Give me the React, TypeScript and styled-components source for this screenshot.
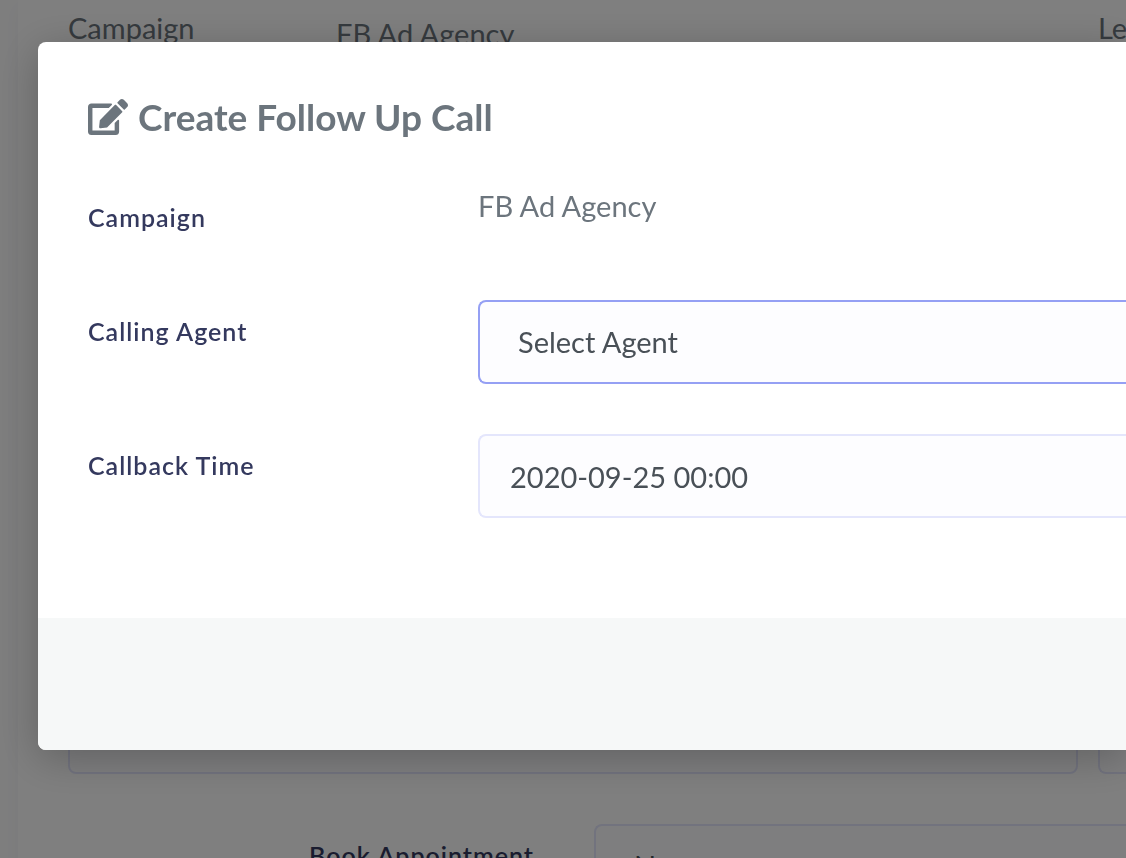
import React from 'react';
import styled, { createGlobalStyle } from 'styled-components';
import { FaEdit } from 'react-icons/fa';

const GlobalStyle = createGlobalStyle`
  *, *::before, *::after { box-sizing: border-box; }
  html, body { margin: 0; height: 100%; overflow: hidden; }
  body {
    background: #fcfcfd;
    color: #6c757d;
    font-family: Lato, "Open Sans", sans-serif;
    font-size: 29px;
    line-height: 40px;
  }
  input, select, textarea, button { font: inherit; margin: 0; }
`;

const Page = styled.div`
  height: 100vh;
  padding-left: 18px;
  overflow: hidden;
`;

const Card = styled.main`
  display: flex;
  flex-direction: column;
  min-height: 100%;
  padding: 8px 0 0 50px;
  background: #fff;
  box-shadow: 0 8px 16px rgba(0, 0, 0, 0.03);
`;

const Columns = styled.div`
  display: flex;
  gap: 20px;
`;

const Column = styled.section<{ $edge?: boolean }>`
  display: flex;
  flex-direction: column;
  flex: ${(p) => (p.$edge ? '0 0 28px' : '1 1 0')};
  min-width: 0;
`;

const Summary = styled.div`
  display: grid;
  grid-template-columns: 268px 1fr;
  height: 66px;
`;

const SummaryValue = styled.span`
  padding-top: 6px;
`;

const Notes = styled.textarea<{ $edge?: boolean }>`
  width: 100%;
  height: 700px;
  border: 2px solid #e4e6fc;
  border-width: ${(p) => (p.$edge ? '2px 0 2px 2px' : '2px')};
  border-radius: ${(p) => (p.$edge ? '8px 0 0 8px' : '8px')};
  background: #fdfdff;
  resize: none;
  outline: none;
`;

const Label = styled.label`
  padding-top: 14px;
  color: #34395e;
  font-size: 25px;
  font-weight: 600;
  line-height: 34px;
  letter-spacing: 1px;
`;

const controlLook = `
  width: 100%;
  height: 84px;
  border: 2px solid #e4e6fc;
  border-right: 0;
  border-radius: 8px 0 0 8px;
  background: #fdfdff;
  color: #495057;
  outline: none;
`;

const Select = styled.select`
  ${controlLook}
  appearance: none;
  padding: 0 38px;

  &:focus { border-color: #95a0f4; }
`;

const AgentSelect = styled(Select)`
  border-color: #95a0f4;
`;

const Input = styled.input`
  ${controlLook}
  padding: 0 30px;
`;

const Booking = styled.div`
  display: grid;
  grid-template-columns: 466px 1fr;
  column-gap: 60px;
  margin-top: 50px;

  ${Label} { text-align: right; }
`;

const Backdrop = styled.div`
  position: fixed;
  inset: 0;
  padding: 42px 0 0 38px;
  background: rgba(0, 0, 0, 0.5);
  overflow: hidden;
`;

const Dialog = styled.div`
  border-radius: 8px 0 0 8px;
  background: #fff;
  box-shadow: 0 8px 40px rgba(0, 0, 0, 0.24);
`;

const Body = styled.form`
  padding: 50px 0 100px 50px;
`;

const Title = styled.h1`
  display: flex;
  align-items: center;
  gap: 10px;
  margin: 0 0 44px;
  font-size: 37px;
  font-weight: 700;
  line-height: 50px;

  svg { width: 40px; height: 36px; }
`;

const Row = styled.div`
  display: grid;
  grid-template-columns: 390px 1fr;
  min-height: 64px;

  & + & { margin-top: 50px; }
`;

const Footer = styled.footer`
  height: 132px;
  border-radius: 0 0 0 8px;
  background: #f6f8f8;
`;

export default function App() {
  return (
    <>
      <GlobalStyle />
      <Page>
        <Card>
          <Columns>
            <Column>
              <Summary>
                <span>Campaign</span>
                <SummaryValue>FB Ad Agency</SummaryValue>
              </Summary>
              <Notes aria-label="Campaign notes" />
            </Column>
            <Column $edge>
              <Summary>
                <span>Le</span>
              </Summary>
              <Notes $edge aria-label="Lead notes" />
            </Column>
          </Columns>
          <Booking>
            <Label htmlFor="booking">Book Appointment</Label>
            <Select id="booking" defaultValue="no">
              <option value="no">No</option>
            </Select>
          </Booking>
        </Card>
      </Page>
      <Backdrop>
        <Dialog role="dialog" aria-modal="true" aria-labelledby="dialog-title">
          <Body>
            <Title id="dialog-title">
              <FaEdit preserveAspectRatio="none" aria-hidden="true" />
              Create Follow Up Call
            </Title>
            <Row>
              <Label as="span">Campaign</Label>
              <span>FB Ad Agency</span>
            </Row>
            <Row>
              <Label htmlFor="agent">Calling Agent</Label>
              <AgentSelect id="agent" defaultValue="">
                <option value="">Select Agent</option>
              </AgentSelect>
            </Row>
            <Row>
              <Label htmlFor="callback">Callback Time</Label>
              <Input id="callback" type="text" defaultValue="2020-09-25 00:00" />
            </Row>
          </Body>
          <Footer />
        </Dialog>
      </Backdrop>
    </>
  );
}
